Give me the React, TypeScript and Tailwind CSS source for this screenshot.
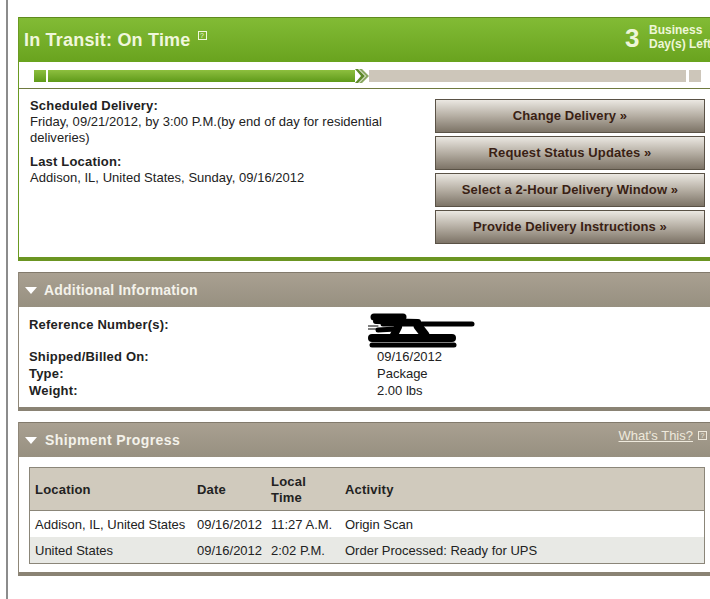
const Help = ({ className = "" }: { className?: string }) => (
  <span
    className={`inline-flex items-center justify-center size-[9px] border border-current text-[7px] leading-none ${className}`}
  >
    ?
  </span>
);

const Arrow = () => (
  <span className="mr-[7px] w-0 h-0 border-x-[6.5px] border-x-transparent border-t-[7px] border-t-white" />
);

const buttons = [
  "Change Delivery »",
  "Request Status Updates »",
  "Select a 2-Hour Delivery Window »",
  "Provide Delivery Instructions »",
];

const rows = [
  ["Addison, IL, United States", "09/16/2012", "11:27 A.M.", "Origin Scan"],
  ["United States", "09/16/2012", "2:02 P.M.", "Order Processed: Ready for UPS"],
];

function SectionHeader({ title, wide, children }: { title: string; wide?: boolean; children?: React.ReactNode }) {
  return (
    <div className="h-[35px] flex items-center pl-[6px] border-t border-[#827a6c] bg-gradient-to-b from-[#a9a091] to-[#979080] relative">
      <Arrow />
      <span className={`text-[14px] font-bold text-[#f4f2ea] ${wide ? "ml-px tracking-[0.4px]" : "tracking-[0.2px]"}`}>
        {title}
      </span>
      {children}
    </div>
  );
}

function TransitCard() {
  return (
    <section className="border-l border-[#6b9a22] border-b-[4px] border-b-[#6b9522] h-[244px]">
      <div className="h-[45px] flex items-center justify-between border-t border-[#5f8a1e] bg-gradient-to-b from-[#82bb35] to-[#69a31e] pl-[5px]">
        <div className="flex items-start text-[#f0f7dc]">
          <span className="text-[18px] font-bold tracking-[0.2px]">In Transit: On Time</span>
          <Help className="ml-[7px] mt-[4px]" />
        </div>
        <div className="flex items-center text-[#eef6d8] -mt-[3px]">
          <span className="text-[26px] font-bold w-[24px]">3</span>
          <span className="text-[12px] font-bold leading-[14px] whitespace-nowrap w-[61px] -mt-[3px]">
            Business
            <br />
            Day(s) Left
          </span>
        </div>
      </div>
      <div className="h-[27px] border-b border-[#6f7a3f] flex items-center pl-[15px] pt-[1px]">
        <div className="w-[12px] h-[12px] bg-gradient-to-b from-[#8dbf3e] to-[#5f9a18]" />
        <div className="ml-[2px] w-[307px] h-[12px] bg-gradient-to-b from-[#8dbf3e] to-[#5f9a18]" />
        <svg width="14" height="14" viewBox="0 0 14 14" className="shrink-0">
          <path d="M0 0 L6 7 L0 14 L3 14 L10 7 L3 0Z" fill="#5f8a2a" />
          <path d="M4 0 L11 7 L4 14 L7 14 L14 7 L7 0Z" fill="#8aa860" />
        </svg>
        <div className="w-[317px] h-[12px] bg-[#cdc6ba]" />
        <div className="ml-[3px] w-[12px] h-[12px] bg-[#cdc6ba]" />
      </div>
      <div className="flex justify-between pt-[9px] pl-[11px] pr-[5px]">
        <div className="w-[370px] text-[13px] leading-[16px] text-[#222] tracking-[0.03px]">
          <p className="font-bold tracking-[0.2px]">Scheduled Delivery:</p>
          <p>Friday, 09/21/2012, by 3:00 P.M.(by end of day for residential deliveries)</p>
          <p className="font-bold mt-[8px] tracking-[0.2px]">Last Location:</p>
          <p>Addison, IL, United States, Sunday, 09/16/2012</p>
        </div>
        <div className="flex flex-col gap-[3px] w-[270px] mt-px">
          {buttons.map((b) => (
            <div
              key={b}
              className="h-[34px] flex items-center justify-center border border-[#5a5246] bg-gradient-to-b from-[#ebe8e2] via-[#b5aea3] to-[#7d7467] text-[13px] font-bold text-[#3a1f14] tracking-[0.1px]"
            >
              {b}
            </div>
          ))}
        </div>
      </div>
    </section>
  );
}

function AdditionalInfo() {
  return (
    <section className="mt-[11px] border-l border-[#8f8778] border-b-[4px] border-b-[#8a8374]">
      <SectionHeader title="Additional Information" />
      <div className="h-[100px] pl-[10px] pt-[9px] text-[13px] leading-[17px] text-[#222]">
        <div className="flex h-[32px]">
          <span className="w-[348px] font-bold tracking-[0.2px]">Reference Number(s):</span>
          {/* hand-scribbled redaction over the reference number */}
          <svg width="110" height="38" viewBox="0 0 110 38" className="-mt-[3px] ml-[-9px] shrink-0">
            <g stroke="#000" strokeLinecap="round" fill="none">
              <path d="M6 4 L35 4" strokeWidth="7" />
              <path d="M8 8 L50 9" strokeWidth="6" />
              <path d="M15 11 L104 11" strokeWidth="5" />
              <path d="M0 13 L10 13 M0 16 L10 16" strokeWidth="1" />
              <path d="M30 14 L26 22" strokeWidth="8" />
              <path d="M50 13 L57 22" strokeWidth="9" />
              <path d="M10 17 L28 16" strokeWidth="5" />
              <path d="M4 25 L84 25" strokeWidth="8" />
              <path d="M4 32 L86 32" strokeWidth="5" />
            </g>
          </svg>
        </div>
        <div className="flex">
          <span className="w-[348px] font-bold tracking-[0.2px]">Shipped/Billed On:</span>
          <span>09/16/2012</span>
        </div>
        <div className="flex">
          <span className="w-[348px] font-bold tracking-[0.2px]">Type:</span>
          <span>Package</span>
        </div>
        <div className="flex">
          <span className="w-[348px] font-bold tracking-[0.2px]">Weight:</span>
          <span>2.00 lbs</span>
        </div>
      </div>
    </section>
  );
}

function ShipmentProgress() {
  return (
    <section className="mt-[11px] border-l border-[#8f8778] border-b-[4px] border-b-[#8a8374]">
      <SectionHeader title="Shipment Progress" wide>
        <div className="absolute right-[3px] top-[3px] flex items-center gap-[5px] text-[#eee9dc]">
          <span className="text-[13px] underline">What's This?</span>
          <Help />
        </div>
      </SectionHeader>
      <div className="pt-[10px] pl-[10px] pb-[8px] pr-[5px]">
        <div className="border border-[#8b8679] text-[13px] text-[#222]">
          <div className="flex items-center h-[43px] pt-px bg-[#d0cabd] border-b border-[#8b8679] font-bold leading-[16px] tracking-[0.2px]">
            <span className="w-[167px] pl-[5px]">Location</span>
            <span className="w-[74px]">Date</span>
            <span className="w-[74px]">
              Local
              <br />
              Time
            </span>
            <span>Activity</span>
          </div>
          {rows.map((r, i) => (
            <div key={r[0]} className={`flex items-center h-[26px] pt-px ${i ? "bg-[#e8e9e5]" : "bg-white"}`}>
              <span className="w-[167px] pl-[5px] whitespace-nowrap">{r[0]}</span>
              <span className="w-[74px]">{r[1]}</span>
              <span className="w-[74px]">{r[2]}</span>
              <span>{r[3]}</span>
            </div>
          ))}
        </div>
      </div>
    </section>
  );
}

export default function App() {
  return (
    <div className="w-[710px] h-[599px] overflow-hidden bg-white font-['Liberation_Sans',Arial,sans-serif]">
      <div className="ml-[6px] h-full border-l-2 border-[#8c8c8c] pl-[10px] pt-[17px]">
        <TransitCard />
        <AdditionalInfo />
        <ShipmentProgress />
      </div>
    </div>
  );
}
